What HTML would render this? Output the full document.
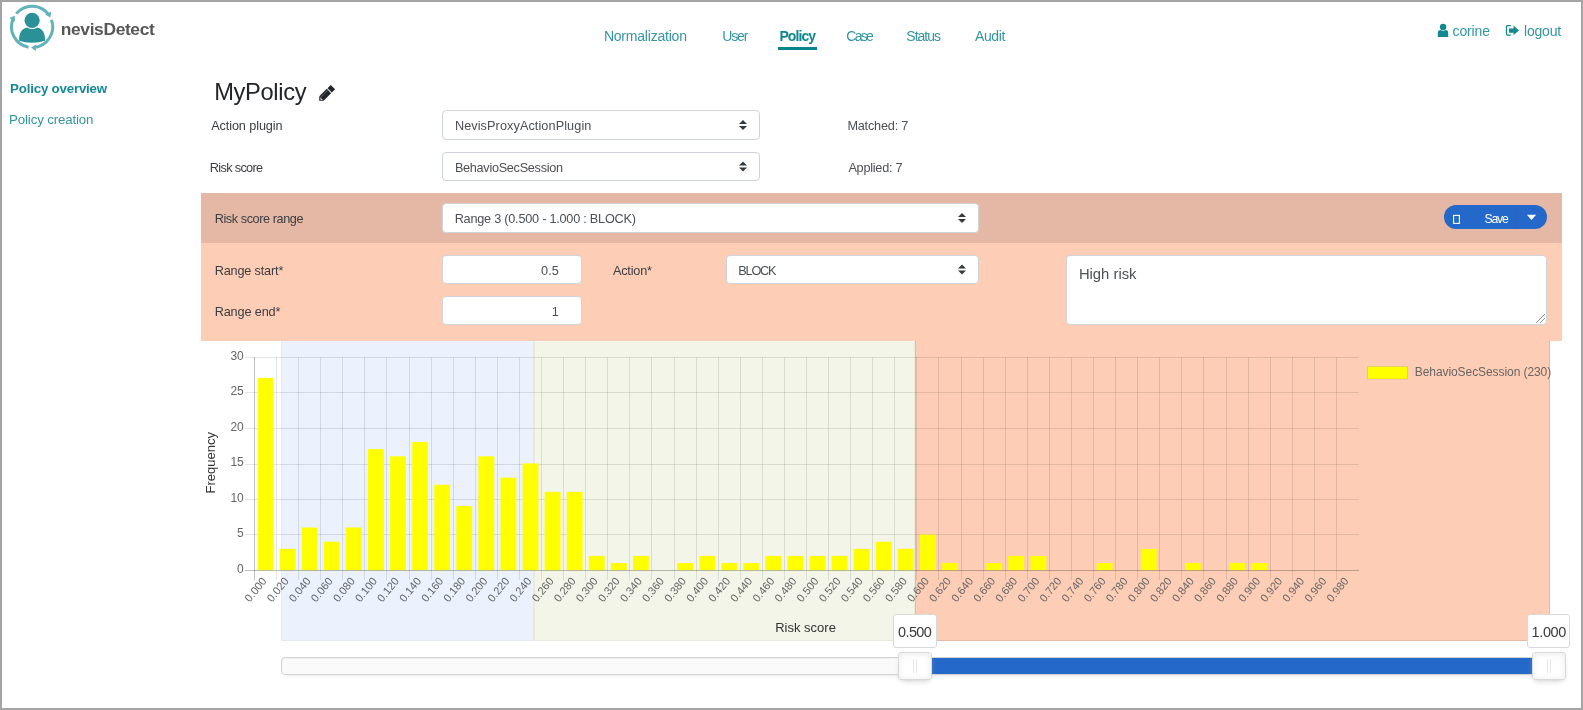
<!DOCTYPE html>
<html><head><meta charset="utf-8"><title>nevisDetect - Policy</title>
<style>
html,body{margin:0;padding:0;}
body{width:1583px;height:710px;overflow:hidden;background:#fff;position:relative;font-family:"Liberation Sans", sans-serif;}
.abs{position:absolute;box-sizing:border-box;}
.fc{background:#fff;border:1px solid #ced4da;border-radius:4px;}
svg{position:absolute;left:0;top:0;overflow:visible;}
.gs{will-change:transform;}
svg text{font-family:"Liberation Sans", sans-serif;}
</style></head><body>
<!-- panel -->
<div class="abs" style="left:201px;top:193px;width:1361px;height:148px;background:#fdcdb5;"></div>
<div class="abs" style="left:201px;top:193px;width:1361px;height:50px;background:#e4b8a4;"></div>
<!-- form controls -->
<div class="abs fc" style="left:442px;top:110px;width:318px;height:30px;"></div>
<div class="abs fc" style="left:442px;top:152px;width:318px;height:29px;"></div>
<div class="abs fc" style="left:442px;top:203px;width:537px;height:30px;"></div>
<div class="abs fc" style="left:442px;top:255px;width:140px;height:29px;"></div>
<div class="abs fc" style="left:442px;top:296px;width:140px;height:29px;"></div>
<div class="abs fc" style="left:726px;top:255px;width:253px;height:29px;"></div>
<div class="abs fc" style="left:1066px;top:255px;width:481px;height:70px;"></div>
<!-- save button -->
<div class="abs" style="left:1444px;top:205px;width:103px;height:24px;border-radius:12px;background:#2469c9;"></div>
<div class="abs" style="left:1516px;top:205px;width:1px;height:24px;background:#2a63bd;"></div>
<!-- chart regions -->
<div class="abs" style="left:281px;top:341px;width:253px;height:300px;background:#ebf2fd;border:1px solid #e2e9f4;border-top:none;"></div>
<div class="abs" style="left:534px;top:341px;width:381px;height:300px;background:#f2f5e7;border:1px solid #e8ebdc;border-top:none;"></div>
<div class="abs" style="left:915px;top:341px;width:635px;height:300px;background:#fdcdb5;border:1px solid #e6b9a3;border-top:none;"></div>
<svg class="gs" width="1583" height="710" viewBox="0 0 1583 710">
<line x1="244.50" y1="534.5" x2="1358.50" y2="534.5" stroke="rgba(0,0,0,0.1)" stroke-width="1" shape-rendering="crispEdges"/><line x1="244.50" y1="499.5" x2="1358.50" y2="499.5" stroke="rgba(0,0,0,0.1)" stroke-width="1" shape-rendering="crispEdges"/><line x1="244.50" y1="464.5" x2="1358.50" y2="464.5" stroke="rgba(0,0,0,0.1)" stroke-width="1" shape-rendering="crispEdges"/><line x1="244.50" y1="428.5" x2="1358.50" y2="428.5" stroke="rgba(0,0,0,0.1)" stroke-width="1" shape-rendering="crispEdges"/><line x1="244.50" y1="392.5" x2="1358.50" y2="392.5" stroke="rgba(0,0,0,0.1)" stroke-width="1" shape-rendering="crispEdges"/><line x1="244.50" y1="357.5" x2="1358.50" y2="357.5" stroke="rgba(0,0,0,0.1)" stroke-width="1" shape-rendering="crispEdges"/><line x1="254.5" y1="357.0" x2="254.5" y2="580.0" stroke="rgba(0,0,0,0.25)" stroke-width="1" shape-rendering="crispEdges"/><line x1="276.5" y1="357.0" x2="276.5" y2="580.0" stroke="rgba(0,0,0,0.1)" stroke-width="1" shape-rendering="crispEdges"/><line x1="298.5" y1="357.0" x2="298.5" y2="580.0" stroke="rgba(0,0,0,0.1)" stroke-width="1" shape-rendering="crispEdges"/><line x1="320.5" y1="357.0" x2="320.5" y2="580.0" stroke="rgba(0,0,0,0.1)" stroke-width="1" shape-rendering="crispEdges"/><line x1="342.5" y1="357.0" x2="342.5" y2="580.0" stroke="rgba(0,0,0,0.1)" stroke-width="1" shape-rendering="crispEdges"/><line x1="364.5" y1="357.0" x2="364.5" y2="580.0" stroke="rgba(0,0,0,0.1)" stroke-width="1" shape-rendering="crispEdges"/><line x1="386.5" y1="357.0" x2="386.5" y2="580.0" stroke="rgba(0,0,0,0.1)" stroke-width="1" shape-rendering="crispEdges"/><line x1="409.5" y1="357.0" x2="409.5" y2="580.0" stroke="rgba(0,0,0,0.1)" stroke-width="1" shape-rendering="crispEdges"/><line x1="431.5" y1="357.0" x2="431.5" y2="580.0" stroke="rgba(0,0,0,0.1)" stroke-width="1" shape-rendering="crispEdges"/><line x1="453.5" y1="357.0" x2="453.5" y2="580.0" stroke="rgba(0,0,0,0.1)" stroke-width="1" shape-rendering="crispEdges"/><line x1="475.5" y1="357.0" x2="475.5" y2="580.0" stroke="rgba(0,0,0,0.1)" stroke-width="1" shape-rendering="crispEdges"/><line x1="497.5" y1="357.0" x2="497.5" y2="580.0" stroke="rgba(0,0,0,0.1)" stroke-width="1" shape-rendering="crispEdges"/><line x1="519.5" y1="357.0" x2="519.5" y2="580.0" stroke="rgba(0,0,0,0.1)" stroke-width="1" shape-rendering="crispEdges"/><line x1="541.5" y1="357.0" x2="541.5" y2="580.0" stroke="rgba(0,0,0,0.1)" stroke-width="1" shape-rendering="crispEdges"/><line x1="563.5" y1="357.0" x2="563.5" y2="580.0" stroke="rgba(0,0,0,0.1)" stroke-width="1" shape-rendering="crispEdges"/><line x1="585.5" y1="357.0" x2="585.5" y2="580.0" stroke="rgba(0,0,0,0.1)" stroke-width="1" shape-rendering="crispEdges"/><line x1="607.5" y1="357.0" x2="607.5" y2="580.0" stroke="rgba(0,0,0,0.1)" stroke-width="1" shape-rendering="crispEdges"/><line x1="629.5" y1="357.0" x2="629.5" y2="580.0" stroke="rgba(0,0,0,0.1)" stroke-width="1" shape-rendering="crispEdges"/><line x1="651.5" y1="357.0" x2="651.5" y2="580.0" stroke="rgba(0,0,0,0.1)" stroke-width="1" shape-rendering="crispEdges"/><line x1="674.5" y1="357.0" x2="674.5" y2="580.0" stroke="rgba(0,0,0,0.1)" stroke-width="1" shape-rendering="crispEdges"/><line x1="696.5" y1="357.0" x2="696.5" y2="580.0" stroke="rgba(0,0,0,0.1)" stroke-width="1" shape-rendering="crispEdges"/><line x1="718.5" y1="357.0" x2="718.5" y2="580.0" stroke="rgba(0,0,0,0.1)" stroke-width="1" shape-rendering="crispEdges"/><line x1="740.5" y1="357.0" x2="740.5" y2="580.0" stroke="rgba(0,0,0,0.1)" stroke-width="1" shape-rendering="crispEdges"/><line x1="762.5" y1="357.0" x2="762.5" y2="580.0" stroke="rgba(0,0,0,0.1)" stroke-width="1" shape-rendering="crispEdges"/><line x1="784.5" y1="357.0" x2="784.5" y2="580.0" stroke="rgba(0,0,0,0.1)" stroke-width="1" shape-rendering="crispEdges"/><line x1="806.5" y1="357.0" x2="806.5" y2="580.0" stroke="rgba(0,0,0,0.1)" stroke-width="1" shape-rendering="crispEdges"/><line x1="828.5" y1="357.0" x2="828.5" y2="580.0" stroke="rgba(0,0,0,0.1)" stroke-width="1" shape-rendering="crispEdges"/><line x1="850.5" y1="357.0" x2="850.5" y2="580.0" stroke="rgba(0,0,0,0.1)" stroke-width="1" shape-rendering="crispEdges"/><line x1="872.5" y1="357.0" x2="872.5" y2="580.0" stroke="rgba(0,0,0,0.1)" stroke-width="1" shape-rendering="crispEdges"/><line x1="894.5" y1="357.0" x2="894.5" y2="580.0" stroke="rgba(0,0,0,0.1)" stroke-width="1" shape-rendering="crispEdges"/><line x1="916.5" y1="357.0" x2="916.5" y2="580.0" stroke="rgba(0,0,0,0.1)" stroke-width="1" shape-rendering="crispEdges"/><line x1="938.5" y1="357.0" x2="938.5" y2="580.0" stroke="rgba(0,0,0,0.1)" stroke-width="1" shape-rendering="crispEdges"/><line x1="961.5" y1="357.0" x2="961.5" y2="580.0" stroke="rgba(0,0,0,0.1)" stroke-width="1" shape-rendering="crispEdges"/><line x1="983.5" y1="357.0" x2="983.5" y2="580.0" stroke="rgba(0,0,0,0.1)" stroke-width="1" shape-rendering="crispEdges"/><line x1="1005.5" y1="357.0" x2="1005.5" y2="580.0" stroke="rgba(0,0,0,0.1)" stroke-width="1" shape-rendering="crispEdges"/><line x1="1027.5" y1="357.0" x2="1027.5" y2="580.0" stroke="rgba(0,0,0,0.1)" stroke-width="1" shape-rendering="crispEdges"/><line x1="1049.5" y1="357.0" x2="1049.5" y2="580.0" stroke="rgba(0,0,0,0.1)" stroke-width="1" shape-rendering="crispEdges"/><line x1="1071.5" y1="357.0" x2="1071.5" y2="580.0" stroke="rgba(0,0,0,0.1)" stroke-width="1" shape-rendering="crispEdges"/><line x1="1093.5" y1="357.0" x2="1093.5" y2="580.0" stroke="rgba(0,0,0,0.1)" stroke-width="1" shape-rendering="crispEdges"/><line x1="1115.5" y1="357.0" x2="1115.5" y2="580.0" stroke="rgba(0,0,0,0.1)" stroke-width="1" shape-rendering="crispEdges"/><line x1="1137.5" y1="357.0" x2="1137.5" y2="580.0" stroke="rgba(0,0,0,0.1)" stroke-width="1" shape-rendering="crispEdges"/><line x1="1159.5" y1="357.0" x2="1159.5" y2="580.0" stroke="rgba(0,0,0,0.1)" stroke-width="1" shape-rendering="crispEdges"/><line x1="1181.5" y1="357.0" x2="1181.5" y2="580.0" stroke="rgba(0,0,0,0.1)" stroke-width="1" shape-rendering="crispEdges"/><line x1="1203.5" y1="357.0" x2="1203.5" y2="580.0" stroke="rgba(0,0,0,0.1)" stroke-width="1" shape-rendering="crispEdges"/><line x1="1226.5" y1="357.0" x2="1226.5" y2="580.0" stroke="rgba(0,0,0,0.1)" stroke-width="1" shape-rendering="crispEdges"/><line x1="1248.5" y1="357.0" x2="1248.5" y2="580.0" stroke="rgba(0,0,0,0.1)" stroke-width="1" shape-rendering="crispEdges"/><line x1="1270.5" y1="357.0" x2="1270.5" y2="580.0" stroke="rgba(0,0,0,0.1)" stroke-width="1" shape-rendering="crispEdges"/><line x1="1292.5" y1="357.0" x2="1292.5" y2="580.0" stroke="rgba(0,0,0,0.1)" stroke-width="1" shape-rendering="crispEdges"/><line x1="1314.5" y1="357.0" x2="1314.5" y2="580.0" stroke="rgba(0,0,0,0.1)" stroke-width="1" shape-rendering="crispEdges"/><line x1="1336.5" y1="357.0" x2="1336.5" y2="580.0" stroke="rgba(0,0,0,0.1)" stroke-width="1" shape-rendering="crispEdges"/><rect x="257.59" y="377.96" width="15.90" height="192.24" fill="#ffff00"/><rect x="279.67" y="548.84" width="15.90" height="21.36" fill="#ffff00"/><rect x="301.75" y="527.48" width="15.90" height="42.72" fill="#ffff00"/><rect x="323.83" y="541.72" width="15.90" height="28.48" fill="#ffff00"/><rect x="345.91" y="527.48" width="15.90" height="42.72" fill="#ffff00"/><rect x="367.99" y="449.16" width="15.90" height="121.04" fill="#ffff00"/><rect x="390.07" y="456.28" width="15.90" height="113.92" fill="#ffff00"/><rect x="412.15" y="442.04" width="15.90" height="128.16" fill="#ffff00"/><rect x="434.23" y="484.76" width="15.90" height="85.44" fill="#ffff00"/><rect x="456.31" y="506.12" width="15.90" height="64.08" fill="#ffff00"/><rect x="478.39" y="456.28" width="15.90" height="113.92" fill="#ffff00"/><rect x="500.47" y="477.64" width="15.90" height="92.56" fill="#ffff00"/><rect x="522.55" y="463.40" width="15.90" height="106.80" fill="#ffff00"/><rect x="544.63" y="491.88" width="15.90" height="78.32" fill="#ffff00"/><rect x="566.71" y="491.88" width="15.90" height="78.32" fill="#ffff00"/><rect x="588.79" y="555.96" width="15.90" height="14.24" fill="#ffff00"/><rect x="610.87" y="563.08" width="15.90" height="7.12" fill="#ffff00"/><rect x="632.95" y="555.96" width="15.90" height="14.24" fill="#ffff00"/><rect x="677.11" y="563.08" width="15.90" height="7.12" fill="#ffff00"/><rect x="699.19" y="555.96" width="15.90" height="14.24" fill="#ffff00"/><rect x="721.27" y="563.08" width="15.90" height="7.12" fill="#ffff00"/><rect x="743.35" y="563.08" width="15.90" height="7.12" fill="#ffff00"/><rect x="765.43" y="555.96" width="15.90" height="14.24" fill="#ffff00"/><rect x="787.51" y="555.96" width="15.90" height="14.24" fill="#ffff00"/><rect x="809.59" y="555.96" width="15.90" height="14.24" fill="#ffff00"/><rect x="831.67" y="555.96" width="15.90" height="14.24" fill="#ffff00"/><rect x="853.75" y="548.84" width="15.90" height="21.36" fill="#ffff00"/><rect x="875.83" y="541.72" width="15.90" height="28.48" fill="#ffff00"/><rect x="897.91" y="548.84" width="15.90" height="21.36" fill="#ffff00"/><rect x="919.99" y="534.60" width="15.90" height="35.60" fill="#ffff00"/><rect x="942.07" y="563.08" width="15.90" height="7.12" fill="#ffff00"/><rect x="986.23" y="563.08" width="15.90" height="7.12" fill="#ffff00"/><rect x="1008.31" y="555.96" width="15.90" height="14.24" fill="#ffff00"/><rect x="1030.39" y="555.96" width="15.90" height="14.24" fill="#ffff00"/><rect x="1096.63" y="563.08" width="15.90" height="7.12" fill="#ffff00"/><rect x="1140.79" y="548.84" width="15.90" height="21.36" fill="#ffff00"/><rect x="1184.95" y="563.08" width="15.90" height="7.12" fill="#ffff00"/><rect x="1229.11" y="563.08" width="15.90" height="7.12" fill="#ffff00"/><rect x="1251.19" y="563.08" width="15.90" height="7.12" fill="#ffff00"/><line x1="244.50" y1="570.5" x2="1358.50" y2="570.5" stroke="rgba(0,0,0,0.25)" stroke-width="1" shape-rendering="crispEdges"/><text x="243.8" y="572.60" font-size="12" fill="#666" text-anchor="end">0</text><text x="243.8" y="537.10" font-size="12" fill="#666" text-anchor="end">5</text><text x="243.8" y="501.60" font-size="12" fill="#666" text-anchor="end">10</text><text x="243.8" y="466.10" font-size="12" fill="#666" text-anchor="end">15</text><text x="243.8" y="430.60" font-size="12" fill="#666" text-anchor="end">20</text><text x="243.8" y="395.10" font-size="12" fill="#666" text-anchor="end">25</text><text x="243.8" y="359.60" font-size="12" fill="#666" text-anchor="end">30</text><text transform="translate(267.19,581.35) rotate(-51)" font-size="11" fill="#666" text-anchor="end">0.000</text><text transform="translate(289.27,581.35) rotate(-51)" font-size="11" fill="#666" text-anchor="end">0.020</text><text transform="translate(311.35,581.35) rotate(-51)" font-size="11" fill="#666" text-anchor="end">0.040</text><text transform="translate(333.43,581.35) rotate(-51)" font-size="11" fill="#666" text-anchor="end">0.060</text><text transform="translate(355.51,581.35) rotate(-51)" font-size="11" fill="#666" text-anchor="end">0.080</text><text transform="translate(377.59,581.35) rotate(-51)" font-size="11" fill="#666" text-anchor="end">0.100</text><text transform="translate(399.67,581.35) rotate(-51)" font-size="11" fill="#666" text-anchor="end">0.120</text><text transform="translate(421.75,581.35) rotate(-51)" font-size="11" fill="#666" text-anchor="end">0.140</text><text transform="translate(443.83,581.35) rotate(-51)" font-size="11" fill="#666" text-anchor="end">0.160</text><text transform="translate(465.91,581.35) rotate(-51)" font-size="11" fill="#666" text-anchor="end">0.180</text><text transform="translate(487.99,581.35) rotate(-51)" font-size="11" fill="#666" text-anchor="end">0.200</text><text transform="translate(510.07,581.35) rotate(-51)" font-size="11" fill="#666" text-anchor="end">0.220</text><text transform="translate(532.15,581.35) rotate(-51)" font-size="11" fill="#666" text-anchor="end">0.240</text><text transform="translate(554.23,581.35) rotate(-51)" font-size="11" fill="#666" text-anchor="end">0.260</text><text transform="translate(576.31,581.35) rotate(-51)" font-size="11" fill="#666" text-anchor="end">0.280</text><text transform="translate(598.39,581.35) rotate(-51)" font-size="11" fill="#666" text-anchor="end">0.300</text><text transform="translate(620.47,581.35) rotate(-51)" font-size="11" fill="#666" text-anchor="end">0.320</text><text transform="translate(642.55,581.35) rotate(-51)" font-size="11" fill="#666" text-anchor="end">0.340</text><text transform="translate(664.63,581.35) rotate(-51)" font-size="11" fill="#666" text-anchor="end">0.360</text><text transform="translate(686.71,581.35) rotate(-51)" font-size="11" fill="#666" text-anchor="end">0.380</text><text transform="translate(708.79,581.35) rotate(-51)" font-size="11" fill="#666" text-anchor="end">0.400</text><text transform="translate(730.87,581.35) rotate(-51)" font-size="11" fill="#666" text-anchor="end">0.420</text><text transform="translate(752.95,581.35) rotate(-51)" font-size="11" fill="#666" text-anchor="end">0.440</text><text transform="translate(775.03,581.35) rotate(-51)" font-size="11" fill="#666" text-anchor="end">0.460</text><text transform="translate(797.11,581.35) rotate(-51)" font-size="11" fill="#666" text-anchor="end">0.480</text><text transform="translate(819.19,581.35) rotate(-51)" font-size="11" fill="#666" text-anchor="end">0.500</text><text transform="translate(841.27,581.35) rotate(-51)" font-size="11" fill="#666" text-anchor="end">0.520</text><text transform="translate(863.35,581.35) rotate(-51)" font-size="11" fill="#666" text-anchor="end">0.540</text><text transform="translate(885.43,581.35) rotate(-51)" font-size="11" fill="#666" text-anchor="end">0.560</text><text transform="translate(907.51,581.35) rotate(-51)" font-size="11" fill="#666" text-anchor="end">0.580</text><text transform="translate(929.59,581.35) rotate(-51)" font-size="11" fill="#666" text-anchor="end">0.600</text><text transform="translate(951.67,581.35) rotate(-51)" font-size="11" fill="#666" text-anchor="end">0.620</text><text transform="translate(973.75,581.35) rotate(-51)" font-size="11" fill="#666" text-anchor="end">0.640</text><text transform="translate(995.83,581.35) rotate(-51)" font-size="11" fill="#666" text-anchor="end">0.660</text><text transform="translate(1017.91,581.35) rotate(-51)" font-size="11" fill="#666" text-anchor="end">0.680</text><text transform="translate(1039.99,581.35) rotate(-51)" font-size="11" fill="#666" text-anchor="end">0.700</text><text transform="translate(1062.07,581.35) rotate(-51)" font-size="11" fill="#666" text-anchor="end">0.720</text><text transform="translate(1084.15,581.35) rotate(-51)" font-size="11" fill="#666" text-anchor="end">0.740</text><text transform="translate(1106.23,581.35) rotate(-51)" font-size="11" fill="#666" text-anchor="end">0.760</text><text transform="translate(1128.31,581.35) rotate(-51)" font-size="11" fill="#666" text-anchor="end">0.780</text><text transform="translate(1150.39,581.35) rotate(-51)" font-size="11" fill="#666" text-anchor="end">0.800</text><text transform="translate(1172.47,581.35) rotate(-51)" font-size="11" fill="#666" text-anchor="end">0.820</text><text transform="translate(1194.55,581.35) rotate(-51)" font-size="11" fill="#666" text-anchor="end">0.840</text><text transform="translate(1216.63,581.35) rotate(-51)" font-size="11" fill="#666" text-anchor="end">0.860</text><text transform="translate(1238.71,581.35) rotate(-51)" font-size="11" fill="#666" text-anchor="end">0.880</text><text transform="translate(1260.79,581.35) rotate(-51)" font-size="11" fill="#666" text-anchor="end">0.900</text><text transform="translate(1282.87,581.35) rotate(-51)" font-size="11" fill="#666" text-anchor="end">0.920</text><text transform="translate(1304.95,581.35) rotate(-51)" font-size="11" fill="#666" text-anchor="end">0.940</text><text transform="translate(1327.03,581.35) rotate(-51)" font-size="11" fill="#666" text-anchor="end">0.960</text><text transform="translate(1349.11,581.35) rotate(-51)" font-size="11" fill="#666" text-anchor="end">0.980</text><text transform="translate(215,462.7) rotate(-90)" font-size="13" fill="#333" text-anchor="middle">Frequency</text>
<rect x="1367.5" y="366.5" width="40" height="12.5" fill="#ffff00" stroke="rgba(150,110,160,0.22)" stroke-width="1"/>
</svg>
<!-- slider -->
<div class="abs" style="left:281px;top:657px;width:1268px;height:18px;background:#fafafa;border:1px solid #d3d3d3;border-radius:4px;box-shadow:inset 0 1px 1px #f0f0f1,0 3px 6px -5px #bbb;"></div>
<div class="abs" style="left:915px;top:658px;width:633px;height:16px;background:#2469c9;"></div>
<div class="abs" style="left:898px;top:652px;width:34px;height:28px;background:#fff;border:1px solid #d9d9d9;border-radius:3px;box-shadow:inset 0 0 1px #fff,inset 0 1px 7px #ebebeb,0 3px 6px -3px #bbb;"></div>
<div class="abs" style="left:913px;top:659px;width:1px;height:14px;background:#e8e7e6;"></div>
<div class="abs" style="left:916px;top:659px;width:1px;height:14px;background:#e8e7e6;"></div>
<div class="abs" style="left:1532px;top:652px;width:34px;height:28px;background:#fff;border:1px solid #d9d9d9;border-radius:3px;box-shadow:inset 0 0 1px #fff,inset 0 1px 7px #ebebeb,0 3px 6px -3px #bbb;"></div>
<div class="abs" style="left:1547px;top:659px;width:1px;height:14px;background:#e8e7e6;"></div>
<div class="abs" style="left:1550px;top:659px;width:1px;height:14px;background:#e8e7e6;"></div>
<div class="abs" style="left:893px;top:614px;width:44px;height:34px;background:#fff;border:1px solid #d9d9d9;border-radius:3px;"></div>
<div class="abs" style="left:1527px;top:614px;width:43px;height:34px;background:#fff;border:1px solid #d9d9d9;border-radius:3px;"></div>
<!-- nav underline -->
<div class="abs" style="left:778px;top:47px;width:39px;height:3px;background:#08848c;"></div>
<svg width="1583" height="710" viewBox="0 0 1583 710">
<path d="M51.46,19.85 A20.6,20.6 0 0 1 34.25,47.39" fill="none" stroke="#62b3b9" stroke-width="3"/><polygon points="31.02,47.47 35.84,51.03 36.19,44.44" fill="#62b3b9"/><path d="M28.52,47.19 A20.6,20.6 0 0 1 13.28,18.52" fill="none" stroke="#62b3b9" stroke-width="3"/><polygon points="14.82,15.68 9.33,18.08 14.87,21.67" fill="#62b3b9"/><path d="M16.32,13.66 A20.6,20.6 0 0 1 48.77,14.79" fill="none" stroke="#62b3b9" stroke-width="3"/><polygon points="50.45,17.55 51.13,11.59 45.24,14.59" fill="#62b3b9"/><path d="M19.2,40.8 C18.6,33 22,28.2 27.3,27.4 C30,29.4 34.2,29.4 36.9,27.4 C42.2,28.2 45.6,33 45,40.8 C38,43.4 26,43.4 19.2,40.8 Z" fill="#2a9199"/><circle cx="32.1" cy="20.3" r="8.4" fill="#fff"/><circle cx="32.1" cy="20.3" r="7.6" fill="#2a9199"/>
<svg x="739" y="120" width="8" height="10" viewBox="0 0 4 5"><path d="M2 0L0 2h4zm0 5L0 3h4z" fill="#343a40"/></svg><svg x="739" y="161.5" width="8" height="10" viewBox="0 0 4 5"><path d="M2 0L0 2h4zm0 5L0 3h4z" fill="#343a40"/></svg><svg x="958" y="213" width="8" height="10" viewBox="0 0 4 5"><path d="M2 0L0 2h4zm0 5L0 3h4z" fill="#343a40"/></svg><svg x="958" y="264.5" width="8" height="10" viewBox="0 0 4 5"><path d="M2 0L0 2h4zm0 5L0 3h4z" fill="#343a40"/></svg><g transform="translate(319.2,100.8) rotate(-45)"><polygon points="0,0 3.2,-3.1 3.2,3.1" fill="#212529"/><polygon points="1.6,0.2 3.3,-1.5 3.3,1.9" fill="#fff"/><rect x="3.2" y="-3.1" width="10.6" height="6.2" fill="#212529"/><rect x="3.2" y="-1.9" width="10.6" height="0.8" fill="#5a5f66"/><rect x="14.8" y="-3.1" width="4.6" height="6.2" fill="#212529"/></g><circle cx="1443.1" cy="26.9" r="3.2" fill="#118892"/><path d="M1437.8,36.9 L1437.8,33 C1437.8,31 1439,30.1 1440.5,30.1 C1441.8,31 1444.4,31 1445.7,30.1 C1447.2,30.1 1448.2,31 1448.2,33 L1448.2,36.9 Z" fill="#118892"/><path d="M1510.8,25.7 L1507.6,25.7 Q1506.5,25.7 1506.5,26.8 L1506.5,34.1 Q1506.5,35.2 1507.6,35.2 L1510.8,35.2" fill="none" stroke="#118892" stroke-width="1.3"/><path d="M1509,28.5 L1513.5,28.5 L1513.5,25.6 L1518.9,30.4 L1513.5,35.2 L1513.5,32.7 L1509,32.7 Z" fill="#118892"/><rect x="1453.6" y="215.4" width="5.8" height="8" fill="none" stroke="#fff" stroke-width="1.1"/><polygon points="1526.9,214.8 1536.1,214.8 1531.5,219.9" fill="#fff"/><path d="M1536,323 L1545,314 M1540,323 L1545,318" stroke="#888" stroke-width="0.9"/>
<text x="60.75" y="34.90" font-size="17.4" font-weight="bold" fill="#575757" letter-spacing="-0.359">nevisDetect</text><text x="603.90" y="40.80" font-size="14" font-weight="normal" fill="#3395a0" letter-spacing="-0.208">Normalization</text><text x="722.20" y="40.80" font-size="14" font-weight="normal" fill="#3395a0" letter-spacing="-1.132">User</text><text x="779.40" y="40.80" font-size="14" font-weight="bold" fill="#0f8790" letter-spacing="-0.911">Policy</text><text x="846.30" y="40.80" font-size="14" font-weight="normal" fill="#3395a0" letter-spacing="-1.732">Case</text><text x="906.30" y="40.80" font-size="14" font-weight="normal" fill="#3395a0" letter-spacing="-0.998">Status</text><text x="975.00" y="40.80" font-size="14" font-weight="normal" fill="#3395a0" letter-spacing="-0.405">Audit</text><text x="1452.60" y="35.70" font-size="14" font-weight="normal" fill="#3395a0" letter-spacing="-0.149">corine</text><text x="1524.00" y="35.70" font-size="14" font-weight="normal" fill="#3395a0" letter-spacing="-0.191">logout</text><text x="10.10" y="92.75" font-size="13.3" font-weight="bold" fill="#168a94" letter-spacing="-0.195">Policy overview</text><text x="9.10" y="123.90" font-size="13.3" font-weight="normal" fill="#3395a0" letter-spacing="-0.155">Policy creation</text><text x="214.20" y="100.10" font-size="23.7" font-weight="normal" fill="#212529" letter-spacing="-0.345">MyPolicy</text><text x="211.20" y="129.80" font-size="12.7" font-weight="normal" fill="#3a3d41" letter-spacing="-0.108">Action plugin</text><text x="209.80" y="171.90" font-size="12.7" font-weight="normal" fill="#3a3d41" letter-spacing="-0.651">Risk score</text><text x="454.90" y="130.00" font-size="12.7" font-weight="normal" fill="#495057" letter-spacing="0.084">NevisProxyActionPlugin</text><text x="454.90" y="171.90" font-size="12.7" font-weight="normal" fill="#495057" letter-spacing="-0.293">BehavioSecSession</text><text x="847.40" y="130.30" font-size="12.7" font-weight="normal" fill="#495057" letter-spacing="-0.201">Matched: 7</text><text x="848.40" y="172.00" font-size="12.7" font-weight="normal" fill="#495057" letter-spacing="-0.253">Applied: 7</text><text x="214.70" y="223.30" font-size="12.7" font-weight="normal" fill="#3a3d41" letter-spacing="-0.422">Risk score range</text><text x="454.70" y="223.00" font-size="12.7" font-weight="normal" fill="#495057" letter-spacing="-0.236">Range 3 (0.500 - 1.000 : BLOCK)</text><text x="1484.40" y="222.70" font-size="12.2" font-weight="normal" fill="#ffffff" letter-spacing="-1.100">Save</text><text x="214.70" y="275.30" font-size="12.7" font-weight="normal" fill="#3a3d41" letter-spacing="-0.172">Range start*</text><text x="214.70" y="316.00" font-size="12.7" font-weight="normal" fill="#3a3d41" letter-spacing="-0.142">Range end*</text><text x="541.10" y="275.00" font-size="12.7" font-weight="normal" fill="#495057" letter-spacing="0.009">0.5</text><text x="551.70" y="316.20" font-size="12.7" font-weight="normal" fill="#495057" letter-spacing="0.000">1</text><text x="612.90" y="274.90" font-size="12.7" font-weight="normal" fill="#3a3d41" letter-spacing="-0.177">Action*</text><text x="738.20" y="275.00" font-size="12.7" font-weight="normal" fill="#495057" letter-spacing="-1.162">BLOCK</text><text x="1078.90" y="278.90" font-size="14.8" font-weight="normal" fill="#495057" letter-spacing="0.005">High risk</text><text x="1414.80" y="375.90" font-size="12" font-weight="normal" fill="#666666" letter-spacing="-0.077">BehavioSecSession (230)</text><text x="775.20" y="631.80" font-size="13" font-weight="normal" fill="#333333" letter-spacing="0.006">Risk score</text><text x="898.00" y="637.00" font-size="14.5" font-weight="normal" fill="#3a3a3a" letter-spacing="-0.605">0.500</text><text x="1531.50" y="637.00" font-size="14.5" font-weight="normal" fill="#3a3a3a" letter-spacing="-0.355">1.000</text>
</svg>
<div class="abs" style="left:0;top:0;width:1583px;height:710px;border:2px solid #a4a4a4;pointer-events:none;"></div>
</body></html>
